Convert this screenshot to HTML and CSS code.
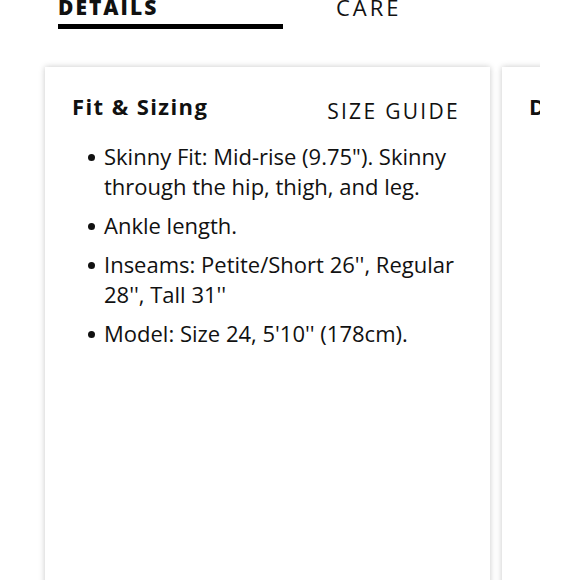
FILE: index.html
```html
<!DOCTYPE html>
<html>
<head>
<meta charset="utf-8">
<link rel="stylesheet" href="styles.css">
</head>
<body>
<div class="tabs">
  <div class="tab active">DETAILS</div>
  <div class="tab">CARE</div>
</div>
<div class="viewport">
  <div class="track">
    <div class="card">
      <div class="card-head">
        <h2 class="card-title">Fit &amp; Sizing</h2>
        <span class="guide">SIZE GUIDE</span>
      </div>
      <ul class="list">
        <li>Skinny Fit: Mid-rise (9.75"). Skinny through the hip, thigh, and leg.</li>
        <li>Ankle length.</li>
        <li>Inseams: Petite/Short 26'', Regular 28'', Tall 31''</li>
        <li>Model: Size 24, 5'10'' (178cm).</li>
      </ul>
    </div>
    <div class="card">
      <div class="card-head">
        <h2 class="card-title">Details</h2>
      </div>
    </div>
  </div>
</div>
</body>
</html>
```
FILE: styles.css
```css
html, body {
  margin: 0;
  padding: 0;
  background: #fff;
  color: #111;
  font-family: "Open Sans", "Lato", sans-serif;
}
.tabs {
  display: flex;
  margin-top: -5px;
  padding-left: 58px;
}
.tab {
  font-size: 21px;
  line-height: 25px;
  padding-bottom: 4px;
  border-bottom: 5px solid transparent;
}
.tab.active {
  width: 225px;
  font-weight: 800;
  letter-spacing: 2px;
  border-bottom-color: #000;
}
.tab:not(.active) {
  margin-left: 53px;
  font-size: 22px;
  letter-spacing: 3px;
  font-weight: 400;
}
.viewport {
  width: 540px;
  overflow: hidden;
  margin-top: 29px;
}
.track {
  display: flex;
  gap: 12px;
  padding: 9px 0 0 45px;
}
.card {
  flex: 0 0 445px;
  height: 540px;
  background: #fff;
  box-shadow: 0 0 6px rgba(0, 0, 0, 0.22);
  padding: 26px 30px 0 27px;
  box-sizing: border-box;
}
.card-head {
  display: flex;
  justify-content: space-between;
  align-items: flex-start;
}
.card-title {
  margin: 0;
  font-size: 22px;
  font-weight: 700;
  letter-spacing: 1.4px;
  line-height: 27px;
}
.guide {
  font-size: 21px;
  letter-spacing: 2.3px;
  margin-top: 5px;
  line-height: 26px;
}
.list {
  list-style: none;
  margin: 17px 0 0 0;
  padding-left: 16px;
  font-size: 22px;
  line-height: 30px;
}
.list li {
  margin-bottom: 9px;
  padding-left: 16px;
  text-indent: -16px;
}
.list li::before {
  content: "";
  display: inline-block;
  width: 7px;
  height: 7px;
  border-radius: 50%;
  background: #111;
  margin-right: 9px;
  vertical-align: 4px;
}
```
